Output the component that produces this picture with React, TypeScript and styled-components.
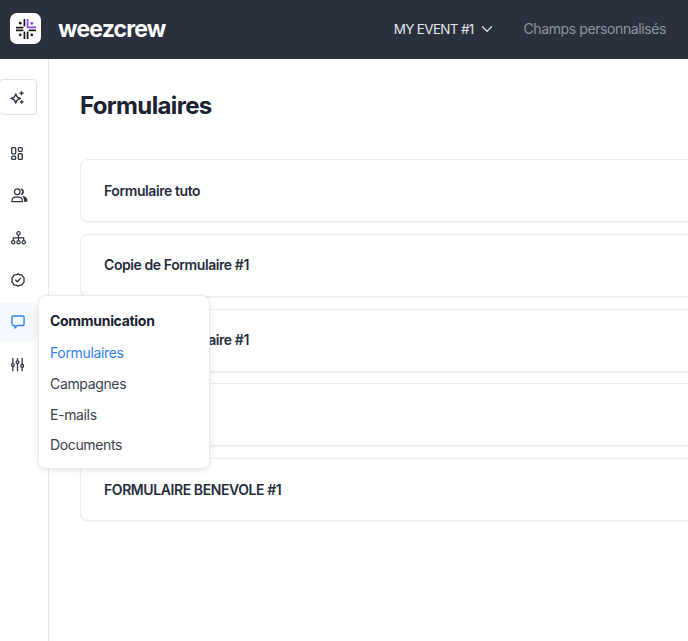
import React from 'react';
import styled, {createGlobalStyle} from 'styled-components';
import {ChevronDown} from 'lucide-react';

const GlobalStyle = createGlobalStyle`
  html, body {
    margin: 0;
    height: 100%;
    overflow: hidden;
    background: #fff;
    font-family: Inter, "Noto Sans", sans-serif;
    color: #1f2636;
  }
  #root {
    height: 100%;
  }
`

const Page = styled.div`
  display: flex;
  flex-direction: column;
  height: 100vh;
  overflow: hidden;
`

const Header = styled.header`
  display: flex;
  align-items: center;
  flex: 0 0 59px;
  height: 59px;
  padding: 0 22px 2px 10px;
  box-sizing: border-box;
  background: #2a303d;
`

const LogoBox = styled.div`
  display: flex;
  align-items: center;
  justify-content: center;
  width: 31px;
  height: 31px;
  background: #fff;
  border-radius: 7px;
`

const Brand = styled.span`
  margin-left: 17px;
  font-size: 23px;
  font-weight: 700;
  letter-spacing: -0.85px;
  color: #fff;
`

const HeaderNav = styled.nav`
  display: flex;
  align-items: center;
  margin-left: auto;
  gap: 28px;
`

const EventPicker = styled.div`
  display: flex;
  align-items: center;
  gap: 4px;
  font-size: 13.5px;
  letter-spacing: -0.7px;
  color: #e3e5e9;
`

const HeaderLink = styled.span`
  font-size: 14px;
  letter-spacing: -0.4px;
  color: #8f94a0;
`

const Body = styled.div`
  position: relative;
  display: flex;
  flex: 1;
  min-height: 0;
`

const Sidebar = styled.aside`
  display: flex;
  flex-direction: column;
  flex: 0 0 49px;
  box-sizing: border-box;
  padding-top: 20px;
  border-right: 1px solid #e6e8ee;
`

const MagicButton = styled.div`
  display: flex;
  align-items: center;
  justify-content: center;
  width: 38px;
  height: 36px;
  margin-left: -1px;
  margin-bottom: 19px;
  padding-right: 1px;
  box-sizing: border-box;
  background: #fff;
  border: 1px solid #dfe1e7;
  border-radius: 4px;
`

const NavList = styled.div`
  display: flex;
  flex-direction: column;
  gap: 3.2px;
`

const NavItem = styled.div<{$active?: boolean}>`
  display: flex;
  align-items: center;
  width: 38px;
  height: 39px;
  padding-left: 11px;
  box-sizing: border-box;
  background: ${p => (p.$active ? '#f5f8fe' : 'transparent')};
  border-radius: 0 8px 8px 0;
  color: ${p => (p.$active ? '#2f80ed' : '#2c3444')};
`

const Main = styled.main`
  flex: 1;
  min-width: 0;
  padding: 32px 0 0 31px;
`

const Title = styled.h1`
  margin: 0 0 39px;
  font-size: 24px;
  line-height: 29px;
  font-weight: 700;
  letter-spacing: -0.65px;
  color: #1a2130;
`

const CardList = styled.div`
  display: flex;
  flex-direction: column;
  gap: 11.8px;
  width: 720px;
`

const Card = styled.div`
  display: flex;
  align-items: center;
  height: 63px;
  padding: 0 0 1px 23px;
  box-sizing: border-box;
  background: #fff;
  border: 1px solid #e9ebf0;
  border-radius: 8px;
  box-shadow: 0 1px 1px rgba(31, 38, 54, 0.06);
  font-size: 14px;
  font-weight: 600;
  letter-spacing: -0.42px;
  color: #262d3b;
`

const Popover = styled.div`
  position: absolute;
  top: 236px;
  left: 38px;
  width: 172px;
  height: 174px;
  padding: 16px 0 0 11px;
  box-sizing: border-box;
  background: #fff;
  border: 1px solid #e8eaef;
  border-radius: 8px;
  box-shadow: 0 2px 6px rgba(31, 38, 54, 0.1);
`

const PopoverTitle = styled.div`
  margin-bottom: 11px;
  font-size: 14px;
  line-height: 18px;
  font-weight: 700;
  letter-spacing: -0.3px;
  color: #1a2130;
`

const PopoverLink = styled.div<{$active?: boolean}>`
  height: 30.8px;
  font-size: 14px;
  line-height: 24px;
  letter-spacing: -0.35px;
  color: ${p => (p.$active ? '#2f80ed' : '#3a4150')};
`

function Logo() {
    return (
        <svg width="20" height="20" viewBox="0 0 19 19">
            <g fill="#141414">
                <rect x="0" y="7.4" width="7" height="1.6" />
                <rect x="0" y="10" width="7" height="1.6" />
                <rect x="12" y="10" width="7" height="1.6" />
                <rect x="7.2" y="12" width="1.6" height="7" />
                <rect x="10.2" y="12" width="1.6" height="7" />
                <rect x="7.2" y="0" width="1.6" height="7" />
                <circle cx="4" cy="4" r="1.3" />
                <circle cx="15" cy="4.2" r="1.3" fill="#8a3ffc" />
                <circle cx="4" cy="15" r="1.3" />
                <circle cx="15" cy="15" r="1.3" />
            </g>
            <path d="M10.2 0h1.6v7.2H19v1.6h-8.8z" fill="#8a3ffc" />
        </svg>
    )
}

function SparkleIcon() {
    return (
        <svg width="15" height="15" viewBox="0 0 17 17" fill="none" stroke="#2c3444" strokeWidth="1.6" strokeLinejoin="round">
            <path d="M6.5 4.5 8.3 8.2 11.8 9.6 8.3 11.2 6.5 14.8 4.8 11.2 1.2 9.6 4.8 8.2z" />
            <path d="M13 1.2 13.7 3 15.4 3.6 13.7 4.3 13 6 12.3 4.3 10.6 3.6 12.3 3z" fill="#2c3444" strokeWidth="0.8" />
            <path d="M13.2 11.6 13.8 13 15.2 13.6 13.8 14.2 13.2 15.6 12.6 14.2 11.2 13.6 12.6 13z" fill="#2c3444" strokeWidth="0.8" />
        </svg>
    )
}

function GridIcon() {
    return (
        <svg width="12" height="13" viewBox="0 0 12 13" fill="none" stroke="currentColor" strokeWidth="1.3">
            <rect x="0.7" y="0.7" width="4" height="6.2" rx="1" />
            <rect x="7.3" y="0.7" width="4" height="3.6" rx="1" />
            <rect x="0.7" y="9.2" width="4" height="3.2" rx="1" />
            <rect x="7.3" y="6.6" width="4" height="5.8" rx="1" />
        </svg>
    )
}

function UsersIcon() {
    return (
        <svg width="17" height="15" viewBox="0 0 18 16" fill="none" stroke="currentColor" strokeWidth="1.3">
            <circle cx="6.6" cy="4" r="3" />
            <path d="M1 14.6v-1.4c0-2.4 2-3.8 5.6-3.8s5.4 1.4 5.4 3.8v1.4z" strokeLinejoin="round" />
            <path d="M10.4 1.2a3 3 0 0 1 0 5.8c1.8 0 2.6-1.2 2.6-2.9s-.8-2.9-2.6-2.9z" fill="currentColor" />
            <path d="M12 8.6c3 .2 5.4 1.6 5.4 4.4v1.6h-3.6c0-2.4-.4-4.4-1.8-6z" fill="currentColor" stroke="none" />
        </svg>
    )
}

function TreeIcon() {
    return (
        <svg width="15" height="14" viewBox="0 0 16 15" fill="none" stroke="currentColor" strokeWidth="1.3">
            <circle cx="8" cy="2.5" r="1.8" />
            <circle cx="2.4" cy="12" r="1.8" />
            <circle cx="8" cy="12" r="1.8" />
            <circle cx="13.6" cy="12" r="1.8" />
            <path d="M8 4.3v5.9M2.4 10.2V7.3h11.2v2.9" />
        </svg>
    )
}

function BadgeIcon() {
    return (
        <svg width="14" height="14" viewBox="0 0 15 15" fill="none" stroke="currentColor" strokeWidth="1.4" strokeLinejoin="round" strokeLinecap="round">
            <path d="M7.5.9 9.4 2 11.6 2 12.7 3.9 14.1 5.4 13.8 7.5 14.1 9.6 12.7 11.1 11.6 13 9.4 13 7.5 14.1 5.6 13 3.4 13 2.3 11.1.9 9.6 1.2 7.5.9 5.4 2.3 3.9 3.4 2 5.6 2z" />
            <path d="M4.9 7.6 6.8 9.4 10.2 5.8" />
        </svg>
    )
}

function ChatIcon() {
    return (
        <svg width="14" height="14" viewBox="0 0 15 15" fill="none" stroke="currentColor" strokeWidth="1.5" strokeLinejoin="round">
            <path d="M2.6 1h9.800c.9 0 1.600.7 1.600 1.600v7c0 .9-.7 1.600-1.600 1.600H6.800l-2.600 2.700v-2.700H2.600c-.9 0-1.600-.7-1.600-1.600v-7C1 1.700 1.700 1 2.600 1z" />
        </svg>
    )
}

function SlidersIcon() {
    return (
        <svg width="13" height="15" viewBox="0 0 14 15" fill="none" stroke="currentColor" strokeWidth="1.4" strokeLinecap="round">
            <path d="M2 .8v5.4M2 9.8v4.4M7 .8v2.2M7 6.8v7.4M12 .8v6.200M12 10.800v3.400" />
            <circle cx="2" cy="8" r="1.5" />
            <circle cx="7" cy="5" r="1.5" />
            <circle cx="12" cy="9" r="1.5" />
        </svg>
    )
}

const forms = ['Formulaire tuto', 'Copie de Formulaire #1', 'Copie de Formulaire #1', 'Formulaire #1', 'FORMULAIRE BENEVOLE #1']
const menu = ['Campagnes', 'E-mails', 'Documents']

export default function App() {
    return (
        <Page>
            <GlobalStyle />
            <Header>
                <LogoBox><Logo /></LogoBox>
                <Brand>weezcrew</Brand>
                <HeaderNav>
                    <EventPicker>
                        MY EVENT #1
                        <ChevronDown size={18} strokeWidth={1.6} />
                    </EventPicker>
                    <HeaderLink>Champs personnalisés</HeaderLink>
                </HeaderNav>
            </Header>
            <Body>
                <Sidebar>
                    <MagicButton><SparkleIcon /></MagicButton>
                    <NavList>
                        <NavItem><GridIcon /></NavItem>
                        <NavItem><UsersIcon /></NavItem>
                        <NavItem><TreeIcon /></NavItem>
                        <NavItem><BadgeIcon /></NavItem>
                        <NavItem $active><ChatIcon /></NavItem>
                        <NavItem><SlidersIcon /></NavItem>
                    </NavList>
                </Sidebar>
                <Main>
                    <Title>Formulaires</Title>
                    <CardList>
                        {forms.map((f, i) => <Card key={i}>{f}</Card>)}
                    </CardList>
                </Main>
                <Popover>
                    <PopoverTitle>Communication</PopoverTitle>
                    <PopoverLink $active>Formulaires</PopoverLink>
                    {menu.map(m => <PopoverLink key={m}>{m}</PopoverLink>)}
                </Popover>
            </Body>
        </Page>
    )
}
